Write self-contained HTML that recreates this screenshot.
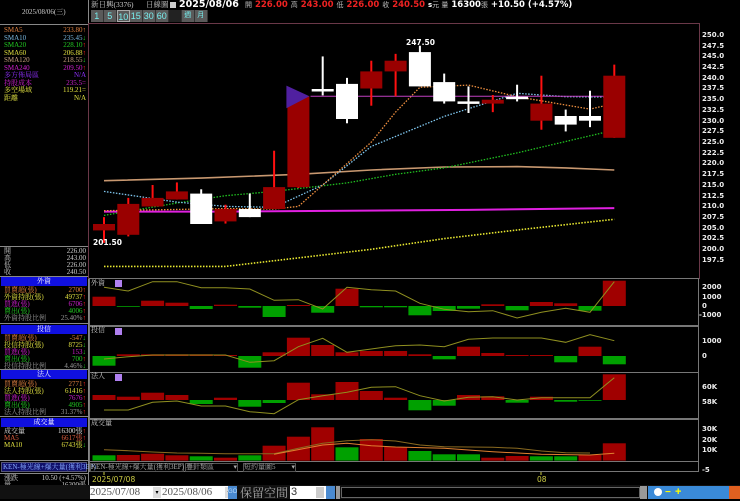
<!DOCTYPE html>
<html><head><meta charset="utf-8"><style>
*{margin:0;padding:0;box-sizing:border-box}
body{width:740px;height:499px;background:#000;overflow:hidden;position:relative;font-family:"Liberation Sans","Noto Sans CJK TC",sans-serif;color:#ddd}
.a{position:absolute;white-space:nowrap}
.s{font-family:"Liberation Serif","Noto Serif CJK SC",serif;font-size:7px;line-height:7.4px}
.row{position:absolute;left:4px;width:82px;height:7.4px}
.row .v{position:absolute;right:0;top:0}
.hdr{position:absolute;left:1px;width:86px;height:9px;background:#1010e0;color:#fff;text-align:center;font-size:7px;line-height:9px;font-family:"Liberation Serif","Noto Serif CJK SC",serif}
.btn{position:absolute;top:10px;height:12px;width:12.5px;background:#5a5a5a;color:#7ee;font-size:9px;line-height:12px;text-align:center;border-right:1px solid #333}
.ax{position:absolute;left:702px;font-size:7px;color:#eee;font-weight:bold;font-family:"DejaVu Sans",sans-serif}
</style></head><body>
<!-- left panel lines -->
<div class="a" style="left:88px;top:0;width:1px;height:499px;background:#888"></div>
<div class="a" style="left:0;top:24px;width:88px;height:1px;background:#888"></div>
<div class="a s" style="left:22px;top:9px;color:#ccc">2025/08/06(三)</div>
<div class="s">
<div class="row" style="top:27px;color:#e08040">SMA5<span class="v">233.80↑</span></div>
<div class="row" style="top:34.5px;color:#7ab8e0">SMA10<span class="v">235.45<span style="color:#2c2">↓</span></span></div>
<div class="row" style="top:42px;color:#2c2">SMA20<span class="v">228.10<span style="color:#f22">↑</span></span></div>
<div class="row" style="top:49.5px;color:#e0e040">SMA60<span class="v">206.88<span style="color:#f22">↑</span></span></div>
<div class="row" style="top:57px;color:#c8a080">SMA120<span class="v">218.55<span style="color:#2c2">↓</span></span></div>
<div class="row" style="top:64.5px;color:#d020d0">SMA240<span class="v">209.50<span style="color:#f22">↑</span></span></div>
<div class="row" style="top:72px;color:#9030ff">多方佈局區<span class="v">N/A</span></div>
<div class="row" style="top:79.5px;color:#d020d0">持股成本<span class="v">235.5=</span></div>
<div class="row" style="top:87px;color:#e0e040">多空場域<span class="v">119.21=</span></div>
<div class="row" style="top:94.5px;color:#e0e040">距離<span class="v">N/A</span></div>
</div>
<div class="a" style="left:0;top:246px;width:88px;height:1px;background:#888"></div>
<div class="s" style="color:#ccc">
<div class="row" style="top:248px">開<span class="v">226.00</span></div>
<div class="row" style="top:255px">高<span class="v">243.00</span></div>
<div class="row" style="top:262px">低<span class="v">226.00</span></div>
<div class="row" style="top:269px">收<span class="v">240.50</span></div>
</div>
<div class="a" style="left:0;top:276px;width:88px;height:1px;background:#888"></div>
<div class="hdr" style="top:277px">外資</div>
<div class="s">
<div class="row" style="top:287px;color:#e08040">買賣超(張)<span class="v">2700<span style="color:#f22">↑</span></span></div>
<div class="row" style="top:294px;color:#e0e040">外資持股(張)<span class="v">49737<span style="color:#f22">↑</span></span></div>
<div class="row" style="top:301px;color:#d020d0">買進(張)<span class="v">6706<span style="color:#f22">↑</span></span></div>
<div class="row" style="top:308px;color:#2c2">賣出(張)<span class="v">4006<span style="color:#f22">↑</span></span></div>
<div class="row" style="top:315px;color:#999">外資持股比例<span class="v">25.40%<span style="color:#f22">↑</span></span></div>
</div>
<div class="a" style="left:0;top:323px;width:88px;height:1px;background:#888"></div>
<div class="hdr" style="top:325px">投信</div>
<div class="s">
<div class="row" style="top:335px;color:#e08040">買賣超(張)<span class="v">-547<span style="color:#2c2">↓</span></span></div>
<div class="row" style="top:342px;color:#e0e040">投信持股(張)<span class="v">8725<span style="color:#2c2">↓</span></span></div>
<div class="row" style="top:349px;color:#d020d0">買進(張)<span class="v">153<span style="color:#2c2">↓</span></span></div>
<div class="row" style="top:356px;color:#2c2">賣出(張)<span class="v">700<span style="color:#f22">↑</span></span></div>
<div class="row" style="top:363px;color:#999">投信持股比例<span class="v">4.46%<span style="color:#2c2">↓</span></span></div>
</div>
<div class="a" style="left:0;top:369px;width:88px;height:1px;background:#888"></div>
<div class="hdr" style="top:370px">法人</div>
<div class="s">
<div class="row" style="top:381px;color:#e08040">買賣超(張)<span class="v">2771<span style="color:#f22">↑</span></span></div>
<div class="row" style="top:388px;color:#e0e040">法人持股(張)<span class="v">61416<span style="color:#f22">↑</span></span></div>
<div class="row" style="top:395px;color:#d020d0">買進(張)<span class="v">7676<span style="color:#f22">↑</span></span></div>
<div class="row" style="top:402px;color:#2c2">賣出(張)<span class="v">4905<span style="color:#f22">↑</span></span></div>
<div class="row" style="top:409px;color:#999">法人持股比例<span class="v">31.37%<span style="color:#f22">↑</span></span></div>
</div>
<div class="a" style="left:0;top:416px;width:88px;height:1px;background:#888"></div>
<div class="hdr" style="top:418px">成交量</div>
<div class="s">
<div class="row" style="top:428px;color:#ddd">成交量<span class="v">16300張<span style="color:#f22">↑</span></span></div>
<div class="row" style="top:435px;color:#e06040">MA5<span class="v">6617張<span style="color:#f22">↑</span></span></div>
<div class="row" style="top:442px;color:#e0e040">MA10<span class="v">6743張<span style="color:#2c2">↓</span></span></div>
</div>
<div class="a" style="left:0;top:460px;width:88px;height:1px;background:#888"></div>
<div class="a s" style="left:1px;top:462px;width:86px;height:10px;background:#10106a;color:#8af;border:1px solid #557;line-height:8px;padding-left:1px">KEN-極光線+爆大量(獲利3EP)</div>
<div class="a" style="left:0;top:473px;width:88px;height:1px;background:#888"></div>
<div class="s" style="color:#ccc">
<div class="row" style="top:475px">漲跌<span class="v">10.50 (+4.57%)</span></div>
<div class="row" style="top:482px">量<span class="v">16300張</span></div>
</div>

<!-- top bar -->
<div class="a s" style="left:91px;top:1px;color:#ccc;font-size:7.5px">新日興(3376)</div>
<div class="a s" style="left:146px;top:1px;color:#ccc;font-size:7.5px">日線圖</div>
<div class="a" style="left:170px;top:2px;width:6px;height:6px;background:#ccc"></div>
<div class="a" style="left:179px;top:0;font-size:9.5px;font-weight:bold;color:#fff;font-family:'DejaVu Sans',sans-serif;line-height:10px">2025/08/06</div>
<div class="a" style="left:245px;top:0;font-size:8.5px;font-weight:bold;font-family:'DejaVu Sans',sans-serif;line-height:10px;color:#bbb"><span style="font-size:7px;font-weight:normal">開</span> <span style="color:#e22">226.00</span> <span style="font-size:7px;font-weight:normal">高</span> <span style="color:#e22">243.00</span> <span style="font-size:7px;font-weight:normal">低</span> <span style="color:#e22">226.00</span> <span style="font-size:7px;font-weight:normal">收</span> <span style="color:#e22">240.50</span> <span style="color:#fff;font-size:7px">s</span><span style="font-size:7px;font-weight:normal">元 量</span> <span style="color:#fff">16300</span><span style="font-size:7px;font-weight:normal">張</span> <span style="color:#fff">+10.50 (+4.57%)</span></div>
<div class="btn" style="left:91px">1</div><div class="btn" style="left:104px">5</div><div class="btn" style="left:117px;border:1px solid #aaa">10</div><div class="btn" style="left:130px">15</div><div class="btn" style="left:143px">30</div><div class="btn" style="left:156px">60</div><div class="btn" style="left:169px;background:#222"></div><div class="btn" style="left:182px;font-size:7px">週</div><div class="btn" style="left:195px;font-size:7px">月</div>

<svg class="a" style="left:0;top:0" width="740" height="499" id="sv"></svg>

<!-- axis labels -->
<div class="ax" style="top:31px">250.0</div><div class="ax" style="top:42px">247.5</div><div class="ax" style="top:52px">245.0</div><div class="ax" style="top:63px">242.5</div><div class="ax" style="top:74px">240.0</div><div class="ax" style="top:84px">237.5</div><div class="ax" style="top:95px">235.0</div><div class="ax" style="top:106px">232.5</div><div class="ax" style="top:117px">230.0</div><div class="ax" style="top:127px">227.5</div><div class="ax" style="top:138px">225.0</div><div class="ax" style="top:149px">222.5</div><div class="ax" style="top:159px">220.0</div><div class="ax" style="top:170px">217.5</div><div class="ax" style="top:181px">215.0</div><div class="ax" style="top:192px">212.5</div><div class="ax" style="top:202px">210.0</div><div class="ax" style="top:213px">207.5</div><div class="ax" style="top:224px">205.0</div><div class="ax" style="top:234px">202.5</div><div class="ax" style="top:245px">200.0</div><div class="ax" style="top:256px">197.5</div>
<div class="ax" style="top:283px">2000</div><div class="ax" style="top:293px">1000</div><div class="ax" style="top:302px">0</div><div class="ax" style="top:311px;left:699px">-1000</div>
<div class="ax" style="top:337px">1000</div><div class="ax" style="top:352px">0</div>
<div class="ax" style="top:383px">60K</div><div class="ax" style="top:398px">58K</div>
<div class="ax" style="top:425px">30K</div><div class="ax" style="top:436px">20K</div><div class="ax" style="top:446px">10K</div><div class="ax" style="top:466px">-5</div>
<div class="a" style="left:93px;top:238px;font-size:7.5px;font-weight:bold;color:#fff;font-family:'DejaVu Sans',sans-serif">201.50</div>
<div class="a" style="left:406px;top:38px;font-size:7.5px;font-weight:bold;color:#fff;font-family:'DejaVu Sans',sans-serif">247.50</div>
<div class="a s" style="left:91px;top:280px;color:#ccc">外資</div><div class="a" style="left:115px;top:280px;width:7px;height:7px;background:#b080f0"></div>
<div class="a s" style="left:91px;top:327px;color:#ccc">投信</div><div class="a" style="left:115px;top:328px;width:7px;height:7px;background:#b080f0"></div>
<div class="a s" style="left:91px;top:373px;color:#ccc">法人</div><div class="a" style="left:115px;top:374px;width:7px;height:7px;background:#b080f0"></div>
<div class="a s" style="left:91px;top:420px;color:#ccc">成交量</div>
<div class="a s" style="left:90px;top:463px;color:#aaa;width:94px;height:9px;border:1px solid #555">KEN-極光線+爆大量(獲利3EP)</div>
<div class="a s" style="left:185px;top:463px;color:#aaa;width:53px;height:9px;border:1px solid #555">疊針類區 <span style="float:right">▾</span></div>
<div class="a s" style="left:243px;top:463px;color:#aaa;width:53px;height:9px;border:1px solid #555">短約量圖5 <span style="float:right">▾</span></div>
<div class="a" style="left:92px;top:475px;font-size:7.5px;color:#cc4;font-family:'DejaVu Sans',sans-serif">2025/07/08</div>
<div class="a" style="left:537px;top:475px;font-size:7.5px;color:#cc4;font-family:'DejaVu Sans',sans-serif">08</div>
<!-- bottom controls -->
<div class="a" style="left:0;top:485px;width:740px;height:14px;background:#111"></div>
<div class="a" style="left:90px;top:486px;width:72px;height:13px;background:#fff;color:#555;font-size:11px;line-height:13px;font-family:'Liberation Serif',serif">2025/07/08<span style="position:absolute;right:1px;top:1px;width:8px;height:11px;background:#ddd;font-size:6px;color:#000;text-align:center">▾</span></div>
<div class="a" style="left:165px;top:487px;color:#ccc;font-size:9px">~</div>
<div class="a" style="left:162px;top:486px;width:72px;height:13px;background:#fff;color:#555;font-size:11px;line-height:13px;font-family:'Liberation Serif',serif;margin-left:0">2025/08/06<span style="position:absolute;right:1px;top:1px;width:8px;height:11px;background:#ddd;font-size:6px;color:#000;text-align:center">▾</span></div>
<div class="a" style="left:228px;top:486px;width:9px;height:13px;background:#4a8ad0;color:#bdf;font-size:6px;line-height:13px">GO</div>
<div class="a" style="left:240px;top:484px;color:#aaa;font-size:12px;font-family:'Noto Serif CJK SC',serif">保留空間</div>
<div class="a" style="left:290px;top:486px;width:36px;height:13px;background:#fff;color:#333;font-size:11px;line-height:13px;padding-left:1px">3</div>
<div class="a" style="left:316px;top:487px;width:8px;height:11px;background:#ccc"></div>
<div class="a" style="left:326px;top:486px;width:9px;height:13px;background:#4a8ad0"></div>
<div class="a" style="left:336px;top:486px;width:4px;height:13px;background:#999"></div>
<div class="a" style="left:341px;top:487px;width:299px;height:11px;background:#000;border:1px solid #666"></div>
<div class="a" style="left:640px;top:486px;width:7px;height:13px;background:#999"></div>
<div class="a" style="left:648px;top:486px;width:82px;height:13px;background:#3a8ad8"></div>
<div class="a" style="left:729px;top:486px;width:11px;height:13px;background:#e06020"></div>
<div class="a" style="left:654px;top:488px;width:8px;height:8px;border-radius:50%;background:#fff"></div>
<div class="a" style="left:665px;top:488px;color:#ff0;font-size:10px;line-height:10px;font-weight:bold">−</div>
<div class="a" style="left:675px;top:487px;color:#ff0;font-size:11px;line-height:11px;font-weight:bold">+</div>

<script>
var sv=document.getElementById('sv'),h='';
function cx(i){return 104+i*24.3}
function py(p){return 35+(250-p)*4.2857}
function R(x,y,w,hh,c){if(hh<0){y+=hh;hh=-hh}h+='<rect x="'+x.toFixed(1)+'" y="'+y.toFixed(1)+'" width="'+w+'" height="'+Math.max(hh,0.8).toFixed(1)+'" fill="'+c+'"/>'}
function L(pts,c,w,d){h+='<polyline fill="none" stroke="'+c+'" stroke-width="'+w+'"'+(d?' stroke-dasharray="'+d+'"':'')+' points="'+pts.join(' ')+'"/>'}
// frames
h+='<rect x="88.5" y="23.5" width="611" height="255" fill="none" stroke="#6a3848"/>';
[[278,325],[326,372],[372,418],[419,461]].forEach(function(a){h+='<rect x="89.5" y="'+(a[0]+.5)+'" width="609" height="'+(a[1]-a[0])+'" fill="none" stroke="#777"/>'});
h+='<rect x="89.5" y="461.5" width="609" height="10" fill="none" stroke="#777"/>';
h+='<line x1="104" y1="472" x2="104" y2="475" stroke="#cc4"/><line x1="541" y1="472" x2="541" y2="475" stroke="#cc4"/>';
// candles [type, top,bottom,high,low] type r=red w=white x=cross
var C=[['r',205.9,204.4,207.5,201.5],['r',210.6,203.4,212,203],['r',212,210,215,210],['r',213.5,211.6,215.6,211.6],['w',213,205.9,214,205.9],['r',209.4,206.5,210.4,206],['w',209.4,207.5,213,207.5],['r',214.5,209.4,223,209.4],['r',235.7,214.5,235.7,214.3],['x',237.4,237,245,235.9],['w',238.6,230.4,240,229.4],['r',241.5,237.5,244,233.5],['r',244,241.5,245.6,235.7],['w',246,238,247.5,238],['w',239,234.5,241,234],['x',234.5,234,238,231.8],['r',234.9,234,236,232],['x',235.6,235.2,238.4,234.5],['r',234,230,240.5,227.9],['w',231.1,229.1,232.6,227.5],['x',231.1,230,237,228.5],['r',240.5,226,243.1,226]];
// MAs first
function MA(arr,c,w,d){L(arr.map(function(v){return cx(v[0]).toFixed(1)+','+py(v[1]).toFixed(1)}),c,w,d)}
MA([[0,196],[5,196],[8,198],[11,200],[14,202.5],[17,204.5],[21,207]],'#e8e830',1.6,'1.5,1.5');
MA([[0,216],[4,216.6],[8,217.5],[11,218.5],[14,219.2],[17,219.3],[19,219],[21,218.5]],'#c89870',1.6);
MA([[0,208.8],[5,208.8],[10,209],[15,209.2],[21,209.6]],'#e020e0',2);
MA([[0,207.9],[3,210.8],[5,212.5],[7,213.5],[10,215.5],[12,217.5],[14,219],[17,222.5],[21,227.8]],'#20c020',1.3,'1.5,1.5');
MA([[0,213.5],[3,211],[5,210],[7,209.8],[9,215],[11,224],[14,231],[17,236.4],[19,235.6],[21,235.5]],'#80c8f0',1.3,'1.5,1.5');
MA([[0,209],[5,209.5],[7,209.4],[8,210],[9,215],[11,225],[12,232],[13,237.8],[15,238.3],[17,235.6],[20,232.7],[21,234]],'#f09040',1.3,'1.5,1.5');
h+='<line x1="'+cx(8.5)+'" y1="'+py(235.7)+'" x2="'+cx(21.3)+'" y2="'+py(235.7)+'" stroke="#c040c0" stroke-width="1"/>';
C.forEach(function(c,i){var x=cx(i),w=22;
 if(c[0]=='r'){h+='<line x1="'+x+'" y1="'+py(c[3])+'" x2="'+x+'" y2="'+py(c[4])+'" stroke="#ff1010" stroke-width="2"/>';R(x-w/2,py(c[1]),w,py(c[2])-py(c[1]),'#9a0000');}
 else {h+='<line x1="'+x+'" y1="'+py(c[3])+'" x2="'+x+'" y2="'+py(c[4])+'" stroke="#fff" stroke-width="2"/>';R(x-w/2,py(c[1]),w,Math.max(py(c[2])-py(c[1]),2.5),'#fff');}
});
var tx=cx(8)-12;h+='<polygon points="'+tx+','+py(238.2)+' '+(tx+23)+','+py(235.7)+' '+tx+','+py(232.9)+'" fill="#5020a0"/>';
// subpanels
function SP(bars,base,line,line2){bars.forEach(function(b,i){var t=275+b/3,bb=275+base/3;R(cx(i)-11.5,Math.min(t,bb),23,Math.abs(t-bb),b<=base?'#a00000':'#00a000')});
 L(line.map(function(v,i){return cx(i).toFixed(1)+','+(275+v/3).toFixed(1)}),'#909020',1);}
SP([65,95,77,83,102,89,98,126,90,113,41,97,97,121,108,101,88,106,81,85,107,17],93,[37,48,20,20,38,38,42,76,74,102,37,44,48,85,103,110,107,129,112,100,112,20]);
SP([272,238,238,238,238,240,278,232,188,210,232,228,228,238,253,215,234,240,240,262,215,268],243,[252,245,240,240,240,240,262,257,215,190,232,222,212,210,215,193,189,189,189,202,179,197]);
SP([360,365,353,360,387,368,395,384,323,358,321,348,368,406,392,360,364,383,365,380,377,298],375,[405,405,382,378,393,393,410,416,374,362,352,337,335,362,378,367,365,375,368,368,368,308]);
var vb=[541,540,536,541,544,548,541,512,485,457,517,492,516,528,538,538,548,543,544,544,540,505],vc=['g','r','r','r','g','r','g','r','r','r','g','r','r','g','g','g','r','r','g','g','r','r'];
vb.forEach(function(b,i){R(cx(i)-11.5,275+b/3,23,(557-b)/3,vc[i]=='r'?'#a00000':'#00a000')});
L([524,527,531,534,535,536,536,536,520,505,497,494,498,510,515,516,517,520,528,533,534].map(function(v,i){return cx(i).toFixed(1)+','+(275+v/3).toFixed(1)}),'#8a6a20',1);
L([[7,538],[9,510],[10,505],[11,512],[12,516],[14,520],[16,530],[18,538],[20,540],[21,535]].map(function(v){return cx(v[0]).toFixed(1)+','+(275+v[1]/3).toFixed(1)}),'#e08030',1);
sv.innerHTML=h;
</script>
</body></html>
